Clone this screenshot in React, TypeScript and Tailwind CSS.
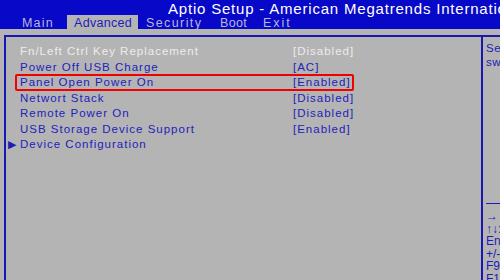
import React from "react";

const rows = [
  { label: "Fn/Left Ctrl Key Replacement", value: "[Disabled]", dim: true },
  { label: "Power Off USB Charge", value: "[AC]" },
  { label: "Panel Open Power On", value: "[Enabled]", marked: true },
  { label: "Networt Stack", value: "[Disabled]" },
  { label: "Remote Power On", value: "[Disabled]" },
  { label: "USB Storage Device Support", value: "[Enabled]" },
  { label: "Device Configuration", sub: true },
];

const help = [
  "\u2192\u2190: Select Screen",
  "\u2191\u2193: Select Item",
  "Enter: Select",
  "+/-: Change Opt.",
  "F9: Optimized Defaults",
  "F1: General Help",
];

const App: React.FC = () => {
  return (
    <div
      className="w-[500px] h-[280px] overflow-hidden bg-[#b4b4b4] flex flex-col"
      style={{ fontFamily: '"Liberation Sans", Arial, sans-serif' }}
    >
      {/* header */}
      <div className="h-[29px] bg-[#0808c8] flex flex-col shrink-0">
        <div className="h-[17px] pl-[168px] whitespace-nowrap text-[15px] leading-[17px] tracking-[0.8px] text-white">
          Aptio Setup - American Megatrends International, LLC.
        </div>
        <div className="h-[12px] flex items-end text-[12.5px] leading-[12px] whitespace-nowrap">
          <div className="ml-[22px] w-[45px] text-[#b8b8d8] tracking-[1.2px]">Main</div>
          <div className="w-[71px] h-[14px] pt-[2px] pl-[7px] bg-[#b4b4b4] text-[#1c1cb8] tracking-[0.3px]">Advanced</div>
          <div className="ml-[8px] w-[74px] text-[#b8b8d8] tracking-[1.4px]">Security</div>
          <div className="w-[43px] text-[#b8b8d8] tracking-[0.3px]">Boot</div>
          <div className="text-[#b8b8d8] tracking-[2px]">Exit</div>
        </div>
      </div>

      {/* body */}
      <div className="pt-[6px] pl-[4px] flex-1">
        <div className="h-full border-l-2 border-t-2 border-[#1818b0] flex">
          <div className="w-[477px] border-r-2 border-[#1818b0] pt-[7px] shrink-0">
            {rows.map((r) => (
              <div key={r.label} className="relative h-[15.5px] flex items-center text-[11.5px] tracking-[1px] whitespace-nowrap">
                <div className="w-[14px] pl-[2px] text-[#1c1cb8] text-[11px] leading-none">
                  {r.sub ? "\u25B6" : ""}
                </div>
                <div className={`w-[273px] ${r.dim ? "text-[#ececec]" : "text-[#2222bc]"}`}>{r.label}</div>
                <div className={r.dim ? "text-[#ececec]" : "text-[#2222bc]"}>{r.value}</div>
                {r.marked && (
                  <div className="absolute left-[9px] top-[-1px] w-[339px] h-[17px] border-2 border-[#f00000] rounded-[2px]" />
                )}
              </div>
            ))}
          </div>
          <div className="flex-1 pl-[3px] pt-[4px] text-[11.5px] text-[#1c1cb8] whitespace-nowrap flex flex-col">
            <div className="leading-[14px] tracking-[0.5px]">Select</div>
            <div className="leading-[14px] tracking-[0.5px]">switch</div>
            <div className="mt-[134px] h-px w-[20px] bg-[#1c1cb8]" />
            <div className="mt-[6px] leading-[12.6px] text-[12px]">
              {help.map((h) => (
                <div key={h}>{h}</div>
              ))}
            </div>
          </div>
        </div>
      </div>
    </div>
  );
};

export default App;
